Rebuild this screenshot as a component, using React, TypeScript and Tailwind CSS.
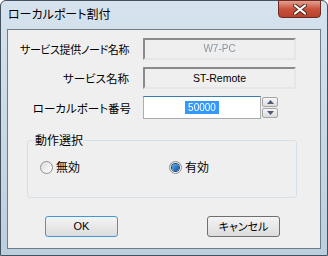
const jp = "font-['Noto_Sans_CJK_JP','Noto_Sans',sans-serif] [font-feature-settings:'palt']";

function ReadOnlyBox({ children }: { children: React.ReactNode }) {
  return (
    <div className="h-[22px] w-[153px] border-2 border-t-[#8a8a8a] border-l-[#8a8a8a] border-r-[#e6e6e6] border-b-[#e6e6e6] bg-[#efefef] flex items-center justify-center">
      {children}
    </div>
  );
}

function Radio({ checked, label }: { checked?: boolean; label: string }) {
  return (
    <div className="flex items-center gap-[3px]">
      <div className="w-[13px] h-[13px] rounded-full border border-[#8e8f8f] bg-gradient-to-br from-[#dcdcdc] to-[#ffffff] flex items-center justify-center">
        {checked && (
          <div className="w-[7px] h-[7px] rounded-full bg-gradient-to-br from-[#5ab0f0] to-[#0d4f99] ring-1 ring-[#1c3f6e]" />
        )}
      </div>
      <span className="text-[12px] leading-[14px] text-black">{label}</span>
    </div>
  );
}

function SpinButton({ up }: { up?: boolean }) {
  return (
    <div className="h-[10px] w-[16px] border border-[#a5a5a5] rounded-[2px] bg-gradient-to-b from-[#f6f6f6] to-[#dcdcdc] flex items-center justify-center">
      <svg width="7" height="4" viewBox="0 0 7 4">
        {up ? <polygon points="3.5,0 7,4 0,4" fill="#4d5a7a" /> : <polygon points="0,0 7,0 3.5,4" fill="#4d5a7a" />}
      </svg>
    </div>
  );
}

export default function App() {
  return (
    <div className={`w-[328px] h-[256px] flex flex-col border border-[#44525f] rounded-t-[6px] bg-gradient-to-b from-[#d6e3ee] via-[#c9d9e6] to-[#bccfdf] ${jp}`}>
      <div className="h-[28px] flex justify-between items-start">
        <div className="pl-[7px] pt-[6px] text-[12px] leading-[14px] text-black">ローカルポート割付</div>
        <div className="mr-[6px] -mt-px w-[43px] h-[18px] rounded-b-[4px] border border-[#6b2a22] bg-gradient-to-b from-[#e2a08f] via-[#c8523c] to-[#b8402c] flex items-center justify-center">
          <svg width="14" height="11" viewBox="0 0 14 11">
            <path d="M2 1.5 L12 9.5 M12 1.5 L2 9.5" stroke="#4a2a25" strokeWidth="4" strokeLinecap="round" />
            <path d="M2 1.5 L12 9.5 M12 1.5 L2 9.5" stroke="#ffffff" strokeWidth="2.2" strokeLinecap="round" />
          </svg>
        </div>
      </div>

      <div className="flex-1 px-[6px] pb-[6px] flex">
        <div className="flex-1 border border-[#6f7d8a] bg-[#efefef] flex flex-col">
          <div className="pt-[8px] grid grid-cols-[123px_auto] gap-x-[12px] gap-y-[7px] items-center text-[11.5px] leading-[14px]">
            <div className="flex justify-end whitespace-nowrap tracking-[-0.4px] text-[11px] pr-[2px]">サービス提供ノード名称</div>
            <ReadOnlyBox>
              <span className="font-['Liberation_Sans',sans-serif] text-[10px] text-[#8a96a0] blur-[0.7px]">W7-PC</span>
            </ReadOnlyBox>
            <div className="flex justify-end whitespace-nowrap pr-[2px]">サービス名称</div>
            <ReadOnlyBox>
              <span className="font-['Liberation_Sans',sans-serif] text-[10.5px] text-black">ST-Remote</span>
            </ReadOnlyBox>
            <div className="flex justify-end whitespace-nowrap">ローカルポート番号</div>
            <div className="flex items-center gap-px">
              <div className="h-[23px] w-[118px] border border-[#abadb3] border-t-[#3d7bad] bg-white flex items-center justify-center">
                <span className="bg-[#3399ff] text-white text-[10px] leading-[13px] px-[3px] blur-[0.6px] font-['Liberation_Sans',sans-serif]">50000</span>
              </div>
              <div className="flex flex-col gap-px">
                <SpinButton up />
                <SpinButton />
              </div>
            </div>
          </div>

          <fieldset className="mt-[14px] ml-[19px] mr-[23px] h-[65px] border border-[#d5dfe5] rounded-[3px] px-[6px]">
            <legend className="text-[12px] leading-[14px] px-px">動作選択</legend>
            <div className="mt-[13px] ml-[6px] flex gap-[89px]">
              <Radio label="無効" />
              <Radio checked label="有効" />
            </div>
          </fieldset>

          <div className="mt-[18px] flex pl-[37px] gap-[89px]">
            <button className="w-[73px] h-[21px] rounded-[3px] border border-[#3c9bd6] bg-gradient-to-b from-[#f4f4f4] to-[#dcdcdc] text-[11px] font-['Liberation_Sans',sans-serif] text-black">
              OK
            </button>
            <button className="w-[73px] h-[21px] rounded-[3px] border border-[#707070] bg-gradient-to-b from-[#f4f4f4] to-[#dcdcdc] text-[11px] text-black">
              キャンセル
            </button>
          </div>
        </div>
      </div>
    </div>
  );
}
